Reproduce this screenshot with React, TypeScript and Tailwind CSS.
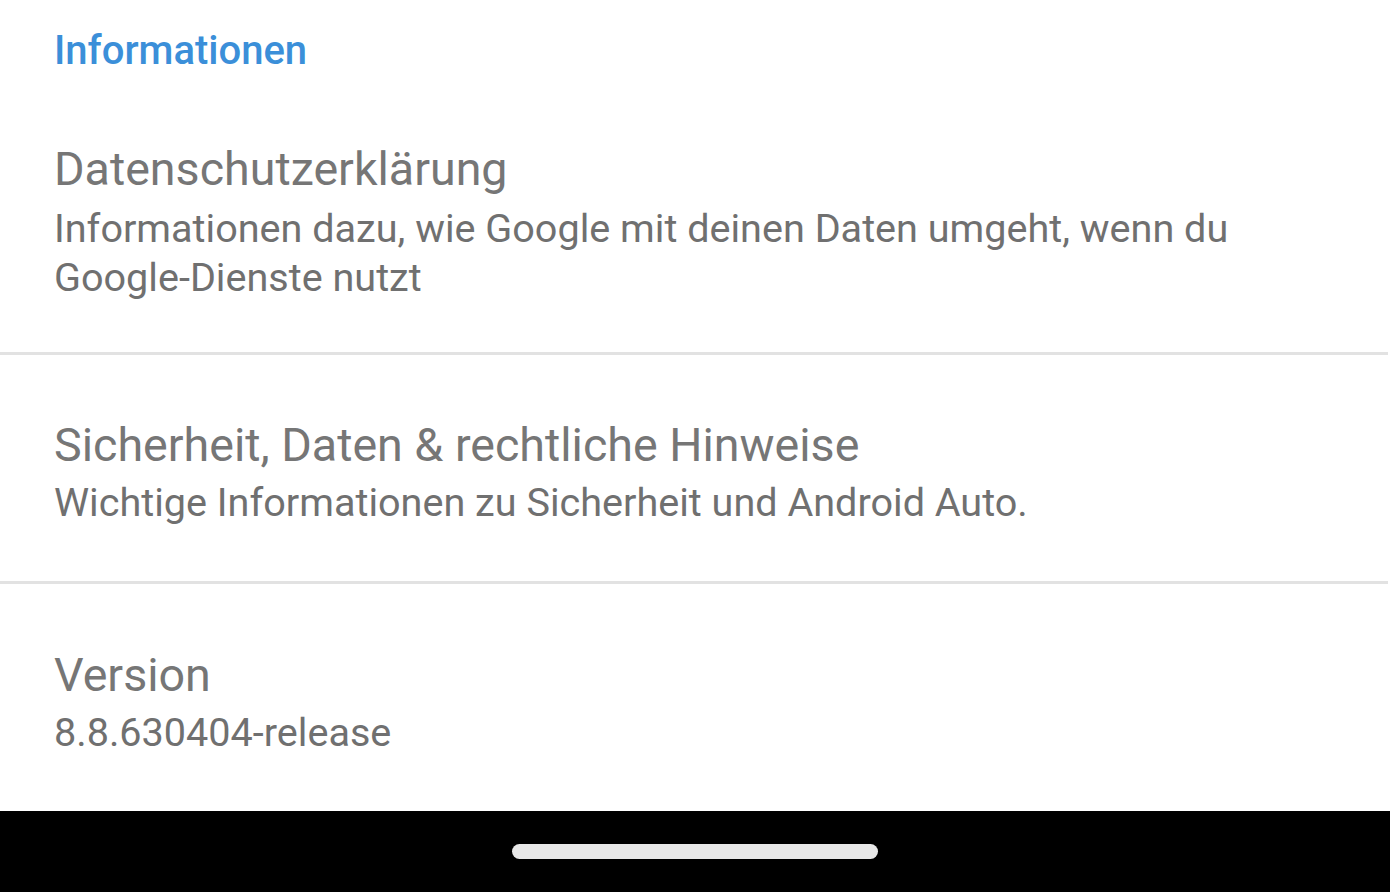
const rows = [
  {
    title: 'Datenschutzerklärung',
    subtitle: 'Informationen dazu, wie Google mit deinen Daten umgeht, wenn du Google-Dienste nutzt',
    pad: 'pt-[66px] pb-[50px]',
    gap: 'mt-[7px]',
  },
  {
    title: 'Sicherheit, Daten & rechtliche Hinweise',
    subtitle: 'Wichtige Informationen zu Sicherheit und Android Auto.',
    pad: 'pt-[62px] pb-[54px]',
    gap: 'mt-[5px]',
  },
  {
    title: 'Version',
    subtitle: '8.8.630404-release',
    pad: 'pt-[63px]',
    gap: 'mt-[5px]',
  },
];

export default function App() {
  return (
    <div
      className="w-[1390px] h-[892px] bg-white flex flex-col overflow-hidden"
      style={{ fontFamily: 'Roboto, "Noto Sans", sans-serif' }}
    >
      <div className="flex-1 flex flex-col">
        <h2 className="pt-[27px] pl-[54px] text-[40px] leading-[48px] font-medium text-[#3b8fd9]">
          Informationen
        </h2>
        {rows.map((row, i) => (
          <div key={row.title} className="flex flex-col">
            {i > 0 && <div className="h-[3px] bg-[#e2e2e2] mr-[2px]" />}
            <div className={`pl-[54px] pr-[100px] ${row.pad}`}>
              <div className="text-[46.6px] leading-[56px] text-[#767676]">{row.title}</div>
              <div className={`${row.gap} text-[39.6px] leading-[49px] text-[#707070]`}>
                {row.subtitle}
              </div>
            </div>
          </div>
        ))}
      </div>
      <div className="h-[81px] bg-black flex items-center justify-center shrink-0">
        <div className="w-[366px] h-[15px] rounded-full bg-[#e8e8e8]" />
      </div>
    </div>
  );
}
